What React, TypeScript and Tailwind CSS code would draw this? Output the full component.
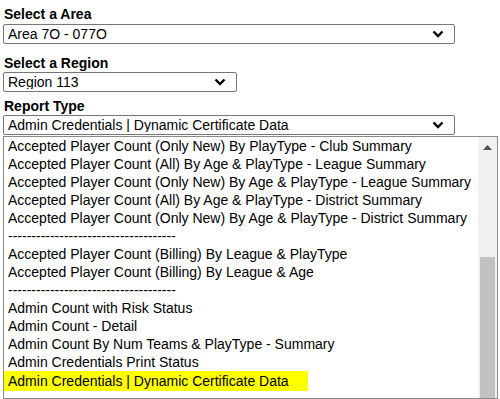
import React from 'react';

const reportOptions = [
  'Accepted Player Count (Only New) By PlayType - Club Summary',
  'Accepted Player Count (All) By Age & PlayType - League Summary',
  'Accepted Player Count (Only New) By Age & PlayType - League Summary',
  'Accepted Player Count (All) By Age & PlayType - District Summary',
  'Accepted Player Count (Only New) By Age & PlayType - District Summary',
  '------------------------------------',
  'Accepted Player Count (Billing) By League & PlayType',
  'Accepted Player Count (Billing) By League & Age',
  '------------------------------------',
  'Admin Count with Risk Status',
  'Admin Count - Detail',
  'Admin Count By Num Teams & PlayType - Summary',
  'Admin Credentials Print Status',
  'Admin Credentials | Dynamic Certificate Data',
];

const selected = 'Admin Credentials | Dynamic Certificate Data';

function Chevron() {
  return (
    <svg width="12" height="8" viewBox="0 0 12 8" className="shrink-0">
      <path d="M1.5 1.5 L6 6 L10.5 1.5" fill="none" stroke="#000" strokeWidth="2.4" />
    </svg>
  );
}

function FakeSelect({ value, width }: { value: string; width: string }) {
  return (
    <div
      className={`${width} h-[20px] flex items-center justify-between border border-[#767676] rounded-[2px] bg-white pl-[4px] pr-[10px]`}
    >
      <span className="text-[14px] leading-none text-black truncate">{value}</span>
      <Chevron />
    </div>
  );
}

export default function App() {
  return (
    <div
      className="w-[500px] h-[399px] overflow-hidden bg-white text-black flex flex-col pl-[3px] pt-[5px]"
      style={{ fontFamily: '"Liberation Sans", Arial, sans-serif' }}
    >
      <label className="text-[14px] font-bold leading-[18px] pl-[1px]">Select a Area</label>
      <div className="mt-[1px]">
        <FakeSelect value="Area 7O - 077O" width="w-[452px]" />
      </div>

      <label className="text-[14px] font-bold leading-[18px] pl-[1px] mt-[10px]">Select a Region</label>
      <div>
        <FakeSelect value="Region 113" width="w-[234px]" />
      </div>

      <label className="text-[14px] font-bold leading-[17px] pl-[1px] mt-[6px]">Report Type</label>
      <div>
        <FakeSelect value={selected} width="w-[452px]" />
      </div>

      <div className="mt-[1px] w-[495px] flex-1 flex border border-[#8a8a8a] bg-white overflow-hidden">
        <ul className="flex-1 pl-[4px]">
          {reportOptions.map((opt, i) => (
            <li
              key={i}
              className={`text-[14px] leading-[18px] whitespace-nowrap ${
                opt === selected ? 'bg-[#ffff00] w-fit pr-[19px] -ml-[4px] pl-[4px] py-[1px]' : ''
              }`}
            >
              {opt}
            </li>
          ))}
        </ul>
        <div className="w-[19px] bg-[#f1f1f1] flex flex-col items-center">
          <div className="h-[20px] w-full flex items-center justify-center">
            <svg width="9" height="5" viewBox="0 0 9 5">
              <path d="M0 5 L4.5 0 L9 5 Z" fill="#505050" />
            </svg>
          </div>
          <div className="mt-[100px] w-[15px] flex-1 bg-[#c1c1c1]" />
        </div>
      </div>
    </div>
  );
}
